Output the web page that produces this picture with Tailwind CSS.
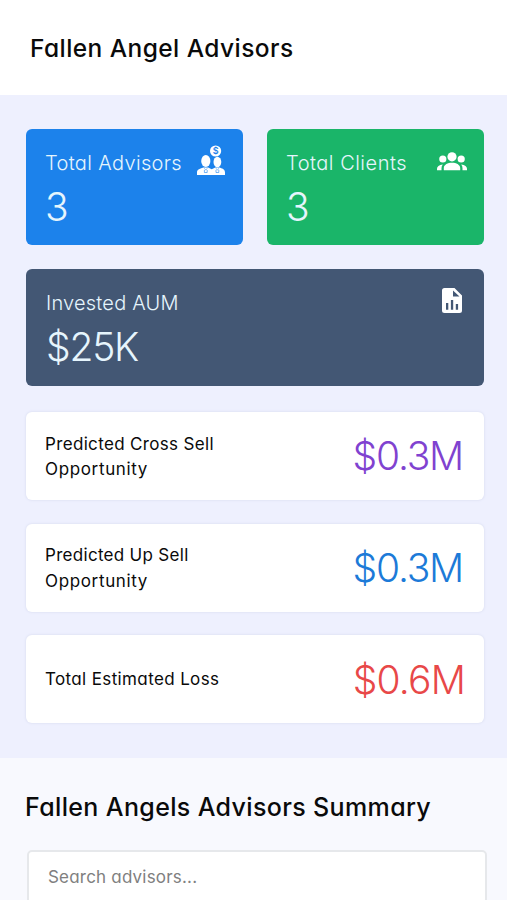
<!DOCTYPE html>
<html lang="en">
<head>
<meta charset="utf-8">
<title>Fallen Angel Advisors</title>
<script src="https://cdn.jsdelivr.net/npm/@tailwindcss/browser@4"></script>
</head>
<body class="w-[507px] h-[900px] overflow-hidden bg-[#f8f9fe] text-[#0a0a0a] font-['Inter','Noto_Sans',sans-serif] [font-feature-settings:'cv11']">
<header class="h-[95px] bg-white flex items-center pl-[30px]">
  <h1 class="text-[24.5px] leading-[32px] font-medium whitespace-nowrap tracking-[0.43px]">Fallen Angel Advisors</h1>
</header>
<main class="h-[663px] bg-[#eef0fe] pt-[34px] pl-[26px] pr-[23px]">
  <div class="grid grid-cols-2 gap-6 text-[#e6f5fd] whitespace-nowrap">
    <section class="h-[116px] rounded-[6px] bg-[#1c82eb] pt-[19px] pl-[19px] pr-[18px]">
      <div class="flex justify-between h-[30px]">
        <h2 class="text-[20px] leading-[30px] font-[350] tracking-[0.35px]">Total Advisors</h2>
        <svg class="w-[28px] h-[32px] -mt-[3px] shrink-0" viewBox="0 0 28 32" fill="#fff"><circle cx="18.600" cy="6" r="5.600"/><ellipse cx="8.800" cy="16" rx="4.600" ry="6"/><ellipse cx="20.400" cy="17" rx="3.900" ry="5.300"/><path d="M0 30v-2.500c0-2.800 2-3.600 6.500-5h4.600l3.600 1.700 3.600-1.700h4.200c3.800 1.200 5.500 2.200 5.500 5V30z"/><text x="18.600" y="9.200" text-anchor="middle" font-size="9" font-weight="600" fill="#1c82eb">$</text><path d="M7.200 23.500l1.600 1.300 1.600-1.300M7.400 25v2.500h2.800V25M18.800 23.500l1.600 1.300 1.600-1.300M19 25v2.500h2.800V25" fill="none" stroke="#1c82eb" stroke-width=".8" opacity=".75"/></svg>
      </div>
      <p class="mt-[5px] text-[39px] leading-[48px] font-light">3</p>
    </section>
    <section class="h-[116px] rounded-[6px] bg-[#1ab569] pt-[19px] pl-[19px] pr-[17px]">
      <div class="flex justify-between h-[30px]">
        <h2 class="text-[20px] leading-[30px] font-[350] tracking-[0.5px]">Total Clients</h2>
        <svg class="w-[30px] h-[20px] mt-[4px] shrink-0" viewBox="0 0 30 20" fill="#fff"><circle cx="15" cy="4.800" r="4.600"/><circle cx="5.800" cy="7" r="3.600"/><circle cx="24.200" cy="7" r="3.600"/><path d="M6.800 18.200v-2.200c0-3.400 4-5.300 8.200-5.300s8.200 1.900 8.200 5.300v2.200zM0 18.200v-1.500c0-2.200 2-3.800 5.800-4.200-.9 1.200-1.300 2.400-1.300 3.700v2zM30 18.200v-1.500c0-2.200-2-3.800-5.800-4.200.9 1.200 1.300 2.400 1.300 3.700v2z"/></svg>
      </div>
      <p class="mt-[5px] text-[39px] leading-[48px] font-light">3</p>
    </section>
    <section class="col-span-2 h-[117px] rounded-[6px] bg-[#435774] pt-[19px] pl-[20px] pr-[21px]">
      <div class="flex justify-between h-[30px]">
        <h2 class="text-[20px] leading-[30px] font-[350] tracking-[0.2px]">Invested AUM</h2>
        <svg class="w-[22px] h-[26px] shrink-0" viewBox="0 0 22 26" fill="#fff"><path fill-rule="evenodd" d="M3.500 0H13.500L21 7.500V22.500A2.500 2.500 0 0 1 18.500 25H3.500A2.500 2.500 0 0 1 1 22.500V2.500A2.500 2.500 0 0 1 3.500 0zM12 2.500V8.500H18.500zM5 15V21.800H7.300V15zM9.900 12V21.800H12.200V12zM14.800 16V21.800H17.100V16z"/></svg>
      </div>
      <p class="mt-[5px] text-[39px] leading-[48px] font-light tracking-[-1.200px]">$25K</p>
    </section>
  </div>
  <div class="mt-[26px] flex flex-col gap-[23.700px] text-[17px] leading-[25.500px] whitespace-nowrap">
    <section class="h-[88px] rounded-[6px] bg-white shadow-[0_0_2px_1px_#e2e5f6] pl-[19px] pr-[21px] flex items-center justify-between">
      <h3 class="pt-[2px]"><span class="tracking-[0.34px]">Predicted Cross Sell</span><br><span class="tracking-[0.65px]">Opportunity</span></h3>
      <p class="text-[39px] leading-[48px] font-light text-[#8042d0] tracking-[-1.200px]">$0.3M</p>
    </section>
    <section class="h-[88px] rounded-[6px] bg-white shadow-[0_0_2px_1px_#e2e5f6] pl-[19px] pr-[21px] flex items-center justify-between">
      <h3 class="pt-[2px]"><span class="tracking-[0.3px]">Predicted Up Sell</span><br><span class="tracking-[0.65px]">Opportunity</span></h3>
      <p class="pt-px text-[39px] leading-[48px] font-light text-[#1c7ad8] tracking-[-1.200px]">$0.3M</p>
    </section>
    <section class="h-[88px] rounded-[6px] bg-white shadow-[0_0_2px_1px_#e2e5f6] pl-[19px] pr-[19px] flex items-center justify-between">
      <h3 class="pt-px tracking-[0.37px]">Total Estimated Loss</h3>
      <p class="pt-[2px] text-[39px] leading-[48px] font-light text-[#e84848] tracking-[-0.800px]">$0.6M</p>
    </section>
  </div>
</main>
<section class="pt-[33px] pl-[25px] pr-[20px]">
  <h2 class="text-[25px] leading-[32px] font-medium whitespace-nowrap tracking-[0.36px]">Fallen Angels Advisors Summary</h2>
  <div class="mt-[27px] ml-[2px] h-[54px] rounded-[5px] border-2 border-[#e6e8eb] bg-white flex items-center pl-[19px] pt-px text-[17px] text-[#808080] tracking-[0.2px]">Search advisors...</div>
</section>
</body>
</html>
